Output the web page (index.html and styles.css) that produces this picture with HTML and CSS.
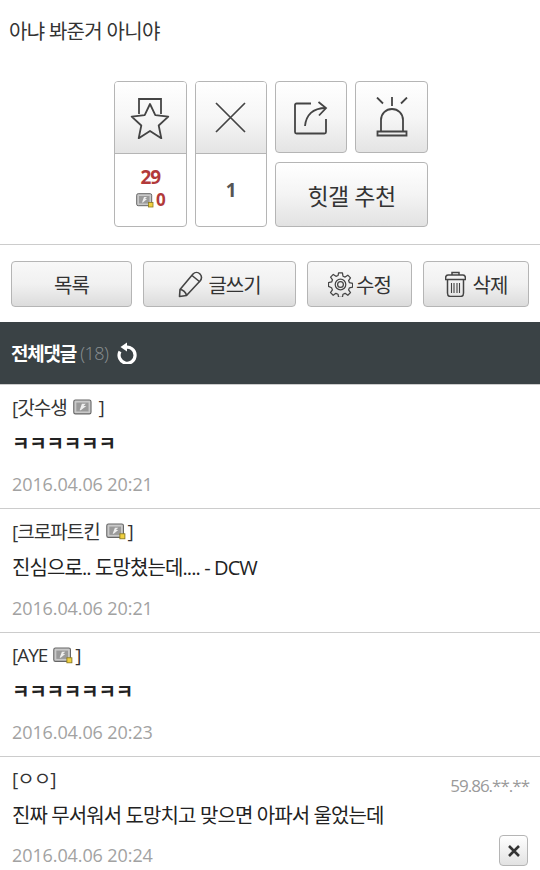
FILE: index.html
```html
<!DOCTYPE html>
<html lang="ko">
<head>
    <meta charset="UTF-8">
    <meta name="viewport" content="width=device-width, initial-scale=1.0">
    <title>전체댓글</title>
    <link rel="stylesheet" href="styles.css">
</head>
<body>
    <svg class="defs" width="0" height="0">
        <symbol id="gonick" viewBox="0 0 18 16">
            <rect x="0.7" y="1.7" width="15.500" height="12.500" rx="1.5" fill="#c9c9c9" stroke="#666"/>
            <rect x="3" y="4" width="11" height="8" fill="#9a9a9a"/>
            <path d="M6 11l2-6h3.500l-2 2h2.500l-5 4z" fill="#eee"/>
        </symbol>
        <symbol id="fixnick" viewBox="0 0 18 16">
            <rect x="0.7" y="1.7" width="15" height="12" rx="1.5" fill="#c9c9c9" stroke="#666"/>
            <rect x="3" y="4" width="10.5" height="7.5" fill="#9a9a9a"/>
            <path d="M6 10.500l2-5.500h3l-2 2h2l-4 3.500z" fill="#eee"/>
            <rect x="12.500" y="10.500" width="4.500" height="4.500" fill="#f0d040" stroke="#8a7a20" stroke-width="0.8"/>
        </symbol>
    </svg>

    <p class="title">아냐 봐준거 아니야</p>

    <div class="reco">
        <div class="reco-col">
            <button class="btn-icon">
                <svg width="40" height="42" viewBox="0 0 40 42" fill="none" stroke="#444" stroke-width="1.8">
                    <path d="M9 17V2h22v15"/>
                    <path d="M20 7l5.300 11.200 13 1.500-9.600 8.800 2.600 12.800L20 34l-11.300 7.300 2.600-12.800-9.600-8.800 13-1.500z" stroke-linejoin="round"/>
                </svg>
            </button>
            <div class="count">
                <b>29</b>
                <span class="count-fix"><svg width="18" height="16"><use href="#fixnick"/></svg><b>0</b></span>
            </div>
        </div>
        <div class="reco-col">
            <button class="btn-icon">
                <svg width="31" height="31" viewBox="0 0 31 31" fill="none" stroke="#444" stroke-width="1.7"><path d="M1 1l29 29M30 1L1 30"/></svg>
            </button>
            <div class="count count-down"><b>1</b></div>
        </div>
        <div class="reco-side">
            <div class="reco-top">
                <button class="btn-icon btn-share">
                    <svg width="34" height="36" viewBox="0 0 34 36" fill="none" stroke="#444" stroke-width="1.8">
                        <path d="M17 4.500H2.500a1.500 1.500 0 0 0-1.500 1.500v27a1.500 1.500 0 0 0 1.500 1.500h28a1.500 1.500 0 0 0 1.500-1.500V20"/>
                        <path d="M11 27c1-10 7-18 21-18"/>
                        <path d="M24.500 3l7.500 6-7 7.500"/>
                    </svg>
                </button>
                <button class="btn-icon">
                    <svg width="32" height="40" viewBox="0 0 32 40" fill="none" stroke="#444" stroke-width="1.8">
                        <path d="M16 0v9M1 0.500l6 6M31 0.500l-6 6"/>
                        <path d="M5 34V23a11 11 0 0 1 22 0v11"/>
                        <path d="M1.500 34.500h29v4h-29z"/>
                    </svg>
                </button>
            </div>
            <button class="btn-reco">힛갤 추천</button>
        </div>
    </div>

    <div class="actions">
        <button class="btn btn-list">목록</button>
        <button class="btn btn-write">
            <svg width="25" height="27" viewBox="0 0 25 27" fill="none" stroke="#444" stroke-width="1.6" stroke-linejoin="round">
                <path d="M1.500 25.500l0.500-7L15 3c2-2 5-2 7 0s2 5 0 7L8.500 24.500z"/>
                <path d="M2 18.500c3 0 6 3 6.500 6M14 4.500l8 6.500"/>
            </svg>
            글쓰기
        </button>
        <button class="btn btn-edit">
            <svg width="25" height="25" viewBox="0 0 26 26" fill="none" stroke="#444" stroke-width="1.3" stroke-linejoin="round">
                <path d="M11 1h4l.6 3.400 2.200.9 2.800-2 2.800 2.800-2 2.800.9 2.200 3.300.7v4l-3.300.6-.9 2.200 2 2.800-2.800 2.800-2.800-2-2.200.9-.6 3.200h-4l-.6-3.200-2.200-.9-2.800 2-2.800-2.800 2-2.800-.9-2.200L.5 15v-4l3.300-.7.9-2.200-2-2.800 2.800-2.800 2.800 2 2.200-.9z"/>
                <circle cx="13" cy="13" r="5.500"/>
                <circle cx="13" cy="13" r="3"/>
            </svg>
            수정
        </button>
        <button class="btn btn-del">
            <svg width="21" height="26" viewBox="0 0 21 26" fill="none" stroke="#444" stroke-width="1.5">
                <path d="M7 4V1.500h7V4"/>
                <path d="M3 4h15c2 0 2.500 2 2.500 3.500v1h-20v-1C.5 6 1 4 3 4z"/>
                <path d="M2.500 9v13c0 2 1 3.500 3 3.500h10c2 0 3-1.500 3-3.500V9"/>
                <path d="M6.500 12v10M9 12v10M12 12v10M14.500 12v10" stroke-width="1.100"/>
            </svg>
            삭제
        </button>
    </div>

    <div class="cmt-head">
        <strong>전체댓글</strong>
        <span class="cmt-total">(18)</span>
        <svg width="22" height="22" viewBox="0 0 22 22" fill="none" stroke="#fff" stroke-width="3.200">
            <path d="M8 5.500a8 8 0 1 1-5 4"/>
            <path d="M10 0.500v9L3.500 5z" fill="#fff" stroke="none"/>
        </svg>
    </div>

    <ul class="cmt-list">
        <li class="cmt">
            <div class="cmt-name">[갓수생 <svg width="20" height="18"><use href="#gonick"/></svg> ]</div>
            <div class="cmt-text cmt-kk">ㅋㅋㅋㅋㅋㅋ</div>
            <div class="cmt-date">2016.04.06 20:21</div>
        </li>
        <li class="cmt">
            <div class="cmt-name">[크로파트킨 <svg width="20" height="18"><use href="#fixnick"/></svg>]</div>
            <div class="cmt-text">진심으로.. 도망쳤는데.... - DCW</div>
            <div class="cmt-date">2016.04.06 20:21</div>
        </li>
        <li class="cmt">
            <div class="cmt-name">[AYE <svg width="20" height="18"><use href="#fixnick"/></svg>]</div>
            <div class="cmt-text cmt-kk">ㅋㅋㅋㅋㅋㅋㅋ</div>
            <div class="cmt-date">2016.04.06 20:23</div>
        </li>
        <li class="cmt cmt-last">
            <div class="cmt-top">
                <div class="cmt-name">[ㅇㅇ]</div>
                <div class="cmt-ip">59.86.**.**</div>
            </div>
            <div class="cmt-text">진짜 무서워서 도망치고 맞으면 아파서 울었는데</div>
            <div class="cmt-bottom">
                <div class="cmt-date">2016.04.06 20:24</div>
                <button class="cmt-del">
                    <svg width="14" height="14" viewBox="0 0 14 14" stroke="#333" stroke-width="2.600"><path d="M2 2l10 10M12 2L2 12"/></svg>
                </button>
            </div>
        </li>
    </ul>
</body>
</html>
```

FILE: styles.css
```css
* {
    margin: 0;
    padding: 0;
    box-sizing: border-box;
}

html, body {
    height: 870px;
    overflow: hidden;
}

body {
    font-family: 'Open Sans', 'Noto Sans CJK KR', sans-serif;
    background: #fff;
    color: #222;
}

button {
    font-family: inherit;
}

.defs {
    position: absolute;
}

.title {
    height: 81px;
    padding: 19px 0 0 9px;
    font-size: 20px;
    line-height: 26px;
    letter-spacing: -0.7px;
    color: #333;
}

.reco {
    display: flex;
    gap: 8px;
    width: 314px;
    height: 146px;
    margin-left: 114px;
}

.reco-col {
    display: flex;
    flex-direction: column;
    width: 73px;
    border: 1px solid #b5b5b5;
    border-radius: 4px;
    overflow: hidden;
}

.btn-icon {
    display: flex;
    align-items: center;
    justify-content: center;
    width: 73px;
    height: 72px;
    border: 1px solid #b5b5b5;
    border-radius: 4px;
    background: linear-gradient(#fff, #f6f6f6 50%, #e4e4e4);
}

.reco-col .btn-icon {
    width: 100%;
    border: none;
    border-bottom: 1px solid #b5b5b5;
    border-radius: 0;
}

.count {
    flex: 1;
    display: flex;
    flex-direction: column;
    align-items: center;
    justify-content: center;
    padding-bottom: 4px;
    font-size: 19px;
    line-height: 22px;
    letter-spacing: -1px;
    color: #b23a3a;
}

.count-fix {
    display: flex;
    align-items: center;
    gap: 2px;
    margin-top: 2px;
    font-size: 17px;
    line-height: 20px;
}

.count-down {
    padding-bottom: 0;
    color: #555;
}

.reco-side {
    display: flex;
    flex-direction: column;
    gap: 9px;
    width: 153px;
}

.reco-top {
    display: flex;
    gap: 8px;
}

.btn-share {
    width: 72px;
}

.btn-reco {
    flex: 1;
    border: 1px solid #b5b5b5;
    border-radius: 4px;
    background: linear-gradient(#fff, #f4f4f4 50%, #e2e2e2);
    font-size: 23px;
    letter-spacing: -0.5px;
    color: #333;
}

.actions {
    display: flex;
    align-items: flex-start;
    height: 78px;
    margin-top: 17px;
    padding: 16px 11px 0;
    border-top: 1px solid #ccc;
}

.btn {
    display: flex;
    align-items: center;
    justify-content: center;
    gap: 5px;
    height: 46px;
    border: 1px solid #b5b5b5;
    border-radius: 4px;
    background: linear-gradient(#f8f8f8, #f1f1f1 50%, #dcdcdc);
    font-size: 20px;
    letter-spacing: -1px;
    color: #333;
}

.btn-list {
    width: 121px;
}

.btn-write {
    width: 153px;
    margin-left: 11px;
}

.btn-edit {
    width: 105px;
    margin-left: 11px;
    gap: 3px;
}

.btn-del {
    width: 106px;
    margin-left: 11px;
    gap: 7px;
}

.cmt-head {
    display: flex;
    align-items: center;
    gap: 4px;
    height: 62px;
    padding-left: 11px;
    background: #3a4245;
    color: #fff;
}

.cmt-head strong {
    font-size: 19px;
    font-weight: 700;
    letter-spacing: -1.2px;
}

.cmt-total {
    margin-right: 5px;
    font-size: 18px;
    font-weight: 300;
    letter-spacing: -0.5px;
    color: #8a9092;
}

.cmt-list {
    list-style: none;
}

.cmt {
    height: 124px;
    padding: 9px 12px 0;
    border-top: 1px solid #ccc;
}

.cmt-name {
    display: flex;
    align-items: center;
    gap: 2px;
    height: 26px;
    font-size: 19px;
    letter-spacing: -1px;
    color: #333;
    white-space: pre;
}

.cmt-text {
    margin-top: 11px;
    height: 26px;
    font-size: 20px;
    line-height: 26px;
    letter-spacing: -0.9px;
    color: #222;
}

.cmt-kk {
    font-size: 19px;
    font-weight: 700;
    letter-spacing: -0.2px;
}

.cmt-date {
    margin-top: 15px;
    font-size: 18px;
    line-height: 24px;
    letter-spacing: -0.1px;
    color: #a2a2a2;
}

.cmt-top {
    display: flex;
    justify-content: space-between;
}

.cmt-ip {
    margin: 8px -1px 0 0;
    font-size: 17px;
    line-height: 26px;
    letter-spacing: -1px;
    color: #9a9a9a;
}

.cmt-last {
    padding-top: 8px;
}

.cmt-last .cmt-text {
    margin-top: 4px;
}

.cmt-bottom {
    display: flex;
    justify-content: space-between;
    align-items: flex-start;
}

.cmt-last .cmt-date {
    margin-top: 14px;
}

.cmt-del {
    display: flex;
    align-items: center;
    justify-content: center;
    width: 29px;
    height: 31px;
    margin-top: 6px;
    border: 1px solid #b5b5b5;
    border-radius: 4px;
    background: linear-gradient(#fff, #e2e2e2);
}
```
